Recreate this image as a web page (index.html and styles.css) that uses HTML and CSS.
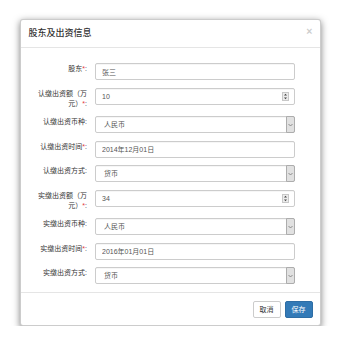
FILE: index.html
```html
<!DOCTYPE html>
<html lang="zh-CN">
<head>
  <meta charset="UTF-8" />
  <meta name="viewport" content="width=device-width, initial-scale=1.0"/>
  <title>股东及出资信息</title>
  <link rel="stylesheet" href="styles.css">
</head>
<body>
  <div class="modal">
    <div class="modal-header">
      <button type="button" class="close">&times;</button>
      <h4 class="modal-title">股东及出资信息</h4>
    </div>

    <div class="modal-body">
      <form class="form-horizontal">
        <div class="form-group">
          <label class="control-label">股东<span class="req">*</span>:</label>
          <div class="field"><input class="form-control" type="text" value="张三"></div>
        </div>

        <div class="form-group">
          <label class="control-label">认缴出资额（万<br>元）<span class="req">*</span>:</label>
          <div class="field">
            <input class="form-control" type="text" value="10">
            <span class="spinner">
              <svg width="7" height="9" viewBox="0 0 7 9"><rect x="0.5" y="0.5" width="6" height="8" fill="#ececec" stroke="#c8c8c8"/><path d="M2 3.5 L3.5 1.8 L5 3.5 Z M2 5.5 L3.5 7.2 L5 5.5 Z" fill="#444"/></svg>
            </span>
          </div>
        </div>

        <div class="form-group">
          <label class="control-label">认缴出资币种:</label>
          <div class="field">
            <select class="form-control"><option>人民币</option></select>
            <span class="caret-box">
              <svg width="5" height="4" viewBox="0 0 5 4"><path d="M0.5 1 L2.5 3 L4.5 1" fill="none" stroke="#777" stroke-width="0.8"/></svg>
            </span>
          </div>
        </div>

        <div class="form-group">
          <label class="control-label">认缴出资时间<span class="req">*</span>:</label>
          <div class="field"><input class="form-control" type="text" value="2014年12月01日"></div>
        </div>

        <div class="form-group">
          <label class="control-label">认缴出资方式:</label>
          <div class="field">
            <select class="form-control"><option>货币</option></select>
            <span class="caret-box">
              <svg width="5" height="4" viewBox="0 0 5 4"><path d="M0.5 1 L2.5 3 L4.5 1" fill="none" stroke="#777" stroke-width="0.8"/></svg>
            </span>
          </div>
        </div>

        <div class="form-group">
          <label class="control-label">实缴出资额（万<br>元）<span class="req">*</span>:</label>
          <div class="field">
            <input class="form-control" type="text" value="34">
            <span class="spinner">
              <svg width="7" height="9" viewBox="0 0 7 9"><rect x="0.5" y="0.5" width="6" height="8" fill="#ececec" stroke="#c8c8c8"/><path d="M2 3.5 L3.5 1.8 L5 3.5 Z M2 5.5 L3.5 7.2 L5 5.5 Z" fill="#444"/></svg>
            </span>
          </div>
        </div>

        <div class="form-group">
          <label class="control-label">实缴出资币种:</label>
          <div class="field">
            <select class="form-control"><option>人民币</option></select>
            <span class="caret-box">
              <svg width="5" height="4" viewBox="0 0 5 4"><path d="M0.5 1 L2.5 3 L4.5 1" fill="none" stroke="#777" stroke-width="0.8"/></svg>
            </span>
          </div>
        </div>

        <div class="form-group">
          <label class="control-label">实缴出资时间<span class="req">*</span>:</label>
          <div class="field"><input class="form-control" type="text" value="2016年01月01日"></div>
        </div>

        <div class="form-group">
          <label class="control-label">实缴出资方式:</label>
          <div class="field">
            <select class="form-control"><option>货币</option></select>
            <span class="caret-box">
              <svg width="5" height="4" viewBox="0 0 5 4"><path d="M0.5 1 L2.5 3 L4.5 1" fill="none" stroke="#777" stroke-width="0.8"/></svg>
            </span>
          </div>
        </div>
      </form>
    </div>

    <div class="modal-footer">
      <button type="button" class="btn btn-default">取消</button>
      <button type="button" class="btn btn-primary">保存</button>
    </div>
  </div>
</body>
</html>
```

FILE: styles.css
```css
:root {
  --primary: #337ab7;
  --primary-border: #2e6da4;
  --border: #ccc;
  --divider: #e5e5e5;
  --text: #333;
  --input-text: #555;
  --required: #e4393c;
}

* {
  box-sizing: border-box;
}

body {
  margin: 0;
  background: #fff;
  color: var(--text);
  font-family: "Liberation Sans", "Noto Sans CJK SC", sans-serif;
}

.modal {
  width: 301px;
  margin: 19px 0 0 20px;
  background: #fff;
  border: 1px solid rgba(0, 0, 0, 0.2);
  border-radius: 3px;
  box-shadow: 0 2.5px 7.5px rgba(0, 0, 0, 0.5);
}

.modal-header {
  padding: 7px 7.5px;
  border-bottom: 1px solid var(--divider);
}

.modal-title {
  margin: 0;
  font-size: 9px;
  font-weight: 500;
  line-height: 13px;
  color: var(--text);
}

.close {
  float: right;
  margin-top: -1px;
  padding: 0;
  border: 0;
  background: transparent;
  font-family: "Liberation Sans", sans-serif;
  font-size: 10.5px;
  font-weight: 700;
  line-height: 1;
  color: #000;
  opacity: 0.2;
  cursor: pointer;
}

.modal-body {
  padding: 15px 7.5px 8px;
}

.form-group {
  display: grid;
  grid-template-columns: 58.5px 200px;
  column-gap: 8px;
  align-items: start;
  margin-bottom: 7.5px;
}

.form-group:last-child {
  margin-bottom: 0;
}

.control-label {
  padding-top: 1px;
  font-size: 7px;
  line-height: 10px;
  text-align: right;
  color: var(--text);
}

.req {
  color: var(--required);
}

.field {
  position: relative;
}

.form-control {
  display: block;
  width: 100%;
  height: 17px;
  margin: 0;
  padding: 3px 6px;
  font-family: inherit;
  font-size: 7px;
  line-height: 9px;
  color: var(--input-text);
  background: #fff;
  border: 1px solid var(--border);
  border-radius: 2px;
  box-shadow: inset 0 0.5px 0.5px rgba(0, 0, 0, 0.075);
  outline: none;
}

select.form-control {
  appearance: none;
  -webkit-appearance: none;
  padding-left: 8px;
}

.spinner {
  position: absolute;
  top: 4px;
  right: 6px;
  line-height: 0;
}

.caret-box {
  position: absolute;
  top: 0;
  right: 0;
  bottom: 0;
  width: 9px;
  display: flex;
  align-items: center;
  justify-content: center;
  background: #e1e1e1;
  border: 1px solid #adadad;
  border-radius: 0 2px 2px 0;
}

.modal-footer {
  display: flex;
  justify-content: flex-end;
  gap: 4px;
  padding: 7.5px;
  border-top: 1px solid var(--divider);
}

.btn {
  padding: 3px 6px;
  font-family: inherit;
  font-size: 7px;
  line-height: 9px;
  border: 1px solid transparent;
  border-radius: 2px;
  cursor: pointer;
}

.btn-default {
  color: var(--text);
  background: #fff;
  border-color: var(--border);
}

.btn-primary {
  color: #fff;
  background: var(--primary);
  border-color: var(--primary-border);
}
```
